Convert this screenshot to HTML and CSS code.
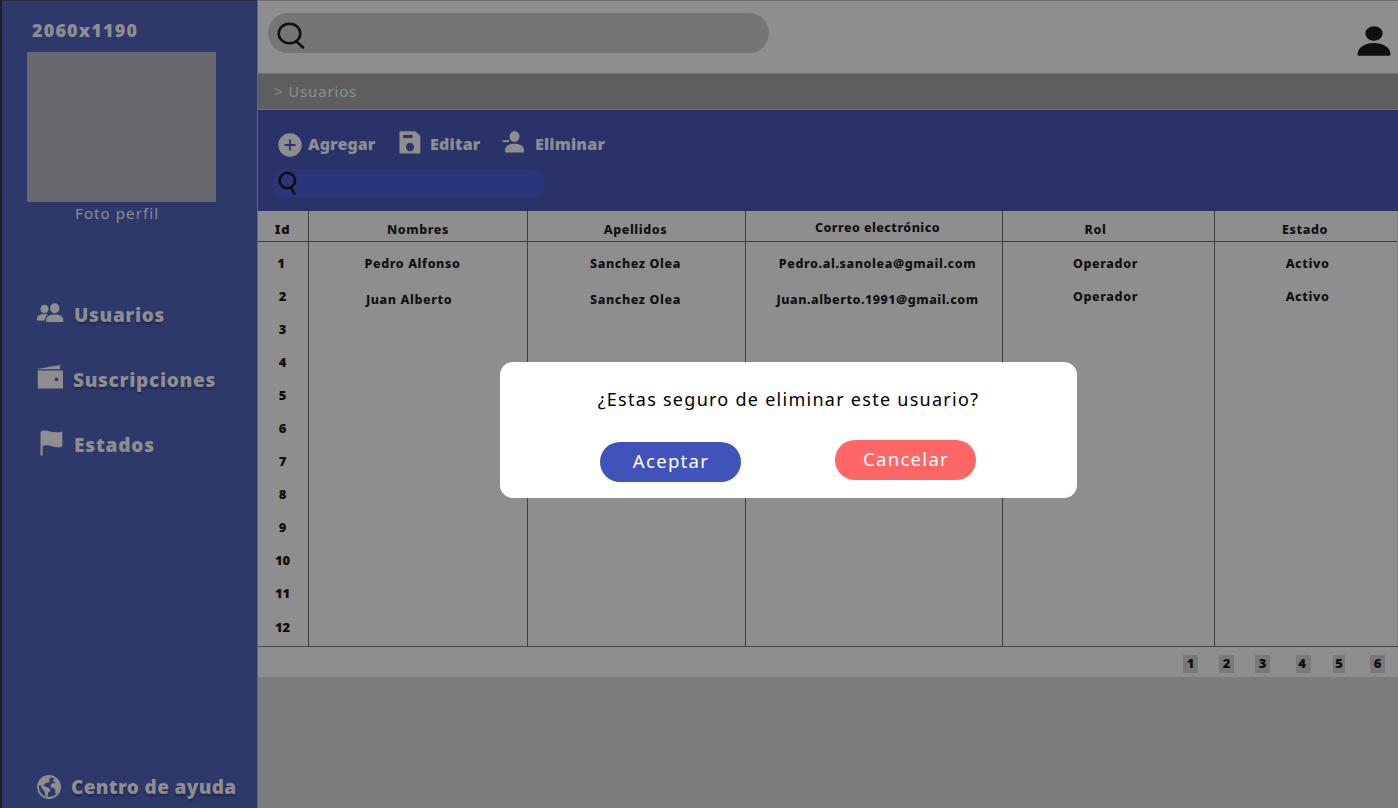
FILE: index.html
```html
<!DOCTYPE html>
<html lang="es">
<head>
<meta charset="utf-8">
<title>Usuarios</title>
<link rel="stylesheet" href="styles.css">
</head>
<body>
<div class="app">
  <aside class="sidebar">
    <div class="brand"><span>2060x1190</span></div>
    <div class="photo"></div>
    <div class="caption"><span>Foto perfil</span></div>
    <nav class="nav">
      <a class="link users"><svg width="27" height="20" viewBox="0 0 27 20"><ellipse cx="7.5" cy="6" rx="4.1" ry="4.3"/><path d="M0 17.500V15.500C0 12.500 3 11 7.500 11L11 11.400Q8 13.500 8 17.500Z"/><ellipse cx="17.700" cy="5.200" rx="4.700" ry="5"/><path d="M9.200 19V16.500C9.200 13 13 11.500 17.700 11.500S26.200 13 26.200 16.500V19Z"/></svg><span>Usuarios</span></a>
      <a class="link subs"><svg width="27" height="24" viewBox="0 0 27 24"><path d="M1 3.800 23 0V4.200H1Z"/><path fill-rule="evenodd" d="M.800 5.500H26V23.500H.800ZM19.500 12.500a1.900 1.900 0 1 0 .01 0Z"/></svg><span>Suscripciones</span></a>
      <a class="link states"><svg width="23" height="26" viewBox="0 0 23 26"><path d="M.500 1.800C7-2 12 4.500 22.300 1.500V16.500C14 19.500 10 13.500 2.700 16V25.500H.500Z"/></svg><span>Estados</span></a>
    </nav>
    <a class="link help"><svg width="24" height="24" viewBox="0 0 24 24"><circle class="ring" cx="12" cy="12" r="11"/><path d="M2 7 6 3 11 1 14 3 11.500 4.500 13 6 11 8 9 7.500 8 9.500 6 10 8 11.500 12 13 13.500 15.500 11 18 10.500 22 8.500 21 7.500 16 4.500 13 4 10.500 1 10ZM17 4 20 5 23 10V14L20 19 18 18 18.500 15 17 13 14 12.500 13.500 10 16 8 18.500 8.500 18 7 15.500 6Z"/></svg><span>Centro de ayuda</span></a>
  </aside>
  <main class="main">
    <header class="topbar">
      <div class="search"><svg width="30" height="28" viewBox="0 0 30 28"><ellipse cx="12.500" cy="11.500" rx="10.800" ry="9.700"/><path d="M19.500 19.500 26 25.500"/></svg></div>
      <svg class="user" width="34" height="30" viewBox="0 0 34 30"><ellipse cx="17" cy="7.500" rx="8.600" ry="7.300"/><path d="M.500 28C1 21 8 17 17 17S33 21 33.500 28Q33.500 29.700 32 29.700H2Q.500 29.700.500 28Z"/></svg>
    </header>
    <div class="crumb"><span>&gt; Usuarios</span></div>
    <section class="tools">
      <div class="actions">
        <a class="action add"><svg width="24" height="24" viewBox="0 0 24 24"><circle cx="12" cy="12" r="11.700"/><path class="plus" d="M12 6.500V17.500M6.500 12H17.500"/></svg><span>Agregar</span></a>
        <a class="action edit"><svg width="22" height="23" viewBox="0 0 22 23"><path fill-rule="evenodd" d="M1 .300H16.500L21.300 5V21.500Q21.300 22.500 20.300 22.500H1.500Q.500 22.500.500 21.500V1ZM4 4V7H13.500V4ZM11 11.800a4 4.200 0 1 0 .01 0Z"/></svg><span>Editar</span></a>
        <a class="action remove"><svg width="23" height="22" viewBox="0 0 23 22"><ellipse cx="12.500" cy="5.500" rx="5" ry="5.400"/><path d="M3 21.500V19C3 15 7 12.800 12.500 12.800S22 15 22 19V21.500Z"/><path d="M.500 9.200H7V11H.500Z"/></svg><span>Eliminar</span></a>
      </div>
      <div class="filter"><svg width="20" height="25" viewBox="0 0 20 25"><circle cx="9.300" cy="9.500" r="7.700"/><path d="M12.800 16.500 16.300 22.500"/></svg></div>
    </section>
    <section class="table">
      <div class="col ids"><b class="head">Id</b><b class="one">1</b><b>2</b><b>3</b><b>4</b><b>5</b><b>6</b><b>7</b><b>8</b><b>9</b><b>10</b><b>11</b><b>12</b></div>
      <div class="col names"><b class="head">Nombres</b><b class="first">Pedro Alfonso</b><b class="second low">Juan Alberto</b></div>
      <div class="col last"><b class="head">Apellidos</b><b>Sanchez Olea</b><b class="low">Sanchez Olea</b></div>
      <div class="col mail"><b class="head">Correo electrónico</b><b class="first">Pedro.al.sanolea@gmail.com</b><b class="second low">Juan.alberto.1991@gmail.com</b></div>
      <div class="col role"><b class="head">Rol</b><b>Operador</b><b>Operador</b></div>
      <div class="col state"><b class="head">Estado</b><b>Activo</b><b>Activo</b></div>
    </section>
    <footer class="pages"><b class="p1">1</b><b class="p2">2</b><b class="p3">3</b><b class="p4">4</b><b class="p5">5</b><b class="p6">6</b></footer>
  </main>
  <div class="dialog">
    <p class="question">¿Estas seguro de eliminar este usuario?</p>
    <div class="buttons"><a class="btn accept">Aceptar</a><a class="btn cancel">Cancelar</a></div>
  </div>
</div>
</body>
</html>
```
FILE: styles.css
```css
* { box-sizing: border-box; }
body { margin: 0; font-family: "Noto Sans", "Open Sans", sans-serif; background: #7c7c7c; }
.app { position: relative; width: 1398px; height: 808px; display: grid; grid-template-columns: 257px 1fr; overflow: hidden; }
svg { display: block; flex: none; fill: #8e8e8e; }
span, b, p, .btn { white-space: nowrap; }

.sidebar { display: flex; flex-direction: column; background: #2d386b; border-left: 2px solid #1f2024; border-top: 1px solid #282c3e; color: #8e8e8e; }
.brand { height: 51px; padding: 14.500px 0 0 30px; font-size: 18px; line-height: 28px; font-weight: 900; letter-spacing: 1.150px; }
.photo { width: 189px; height: 150px; margin-left: 25px; background: #68696f; }
.caption { padding-left: 73px; font-size: 15px; line-height: 22px; letter-spacing: 1.100px; font-weight: 400; }
.nav { display: flex; flex-direction: column; padding-top: 58px; }
.link { display: flex; height: 65px; align-items: center; font-size: 19px; font-weight: 900; letter-spacing: .650px; text-shadow: 0 2px 2px #1f284e; }
.users { padding-left: 35px; gap: 10px; }
.subs { padding-left: 35px; gap: 9px; letter-spacing: .700px; }
.states { padding-left: 38px; gap: 11px; letter-spacing: .850px; text-shadow: none; }
.users svg { margin-top: -3px; }
.subs svg { margin-top: -6px; }
.states svg { margin-top: -4px; }
.help { margin-top: auto; height: 43px; padding-left: 35px; gap: 10px; letter-spacing: .350px; }
.ring { fill: none; stroke: #8e8e8e; stroke-width: 1.8; }

.main { display: flex; flex-direction: column; min-width: 0; border-left: 1px solid #66676b; border-top: 1px solid #6b6b6b; }
.topbar { height: 72px; display: flex; justify-content: space-between; background: #8e8e8e; padding: 12px 7.500px 0 10px; }
.search { width: 501px; height: 40px; border-radius: 20px; background: #757575; padding: 9px 0 0 9px; }
.search svg, .filter svg { fill: none; stroke: #0f0f0f; stroke-width: 2.6; stroke-linecap: round; }
.user { fill: #0f0f0f; margin-top: 13px; }
.crumb { height: 37px; background: #5e5e5e; border-top: 1px solid #717171; border-bottom: 1px solid #717171; padding-left: 16px; color: #8e8e8e; font-size: 15px; line-height: 35px; font-weight: 400; letter-spacing: .850px; }
.tools { height: 101px; background: #29336a; }
.actions { display: flex; height: 60px; padding: 21px 0 0 20px; color: #8e8e8e; font-size: 16px; font-weight: 900; line-height: 26px; letter-spacing: .100px; }
.action { display: flex; }
.add { width: 121px; gap: 6px; }
.add svg { margin-top: 2px; }
.edit { width: 103px; gap: 9px; letter-spacing: .250px; }
.remove { gap: 10px; letter-spacing: .200px; }
.plus { stroke: #29336a; stroke-width: 1.8; }
.filter { width: 272px; height: 27px; margin-left: 15px; border-radius: 14px; background: #2a367c; padding: 1px 0 0 5px; }

.table { display: grid; grid-template-columns: 51px 219px 218px 257px 212px 183px; height: 436px; background: #8e8e8e; border-bottom: 1px solid #454545; color: #0f0f0f; font-size: 12.500px; }
.col { display: flex; flex-direction: column; border-right: 1px solid #3e3e3e; }
.state { border-right: 1px solid #7c7c7c; }
.col b { height: 33.100px; line-height: 33px; padding-top: 4.500px; text-align: center; font-weight: 800; letter-spacing: .600px; }
.col .head { height: 31px; line-height: 37px; padding-top: 0; border-bottom: 1px solid #3e3e3e; letter-spacing: .600px; }
.col .low { padding-top: 7.500px; }
.ids b { font-size: 13px; font-weight: 900; letter-spacing: 0; padding-right: 1px; }
.ids .one { padding-right: 4px; }
.names .first { padding-right: 11px; }
.names .second { padding-right: 18px; }
.last b { padding-right: 2px; }
.mail b { padding-left: 7px; }
.mail .second { letter-spacing: .530px; }
.mail .head { line-height: 34px; letter-spacing: .450px; }
.role b { padding-right: 6px; }
.role .head { padding-right: 26px; line-height: 38px; }
.state b { padding-left: 3px; }
.state .head { padding-left: 0; padding-right: 2px; }
.pages { height: 30px; display: flex; padding: 8px 0 0 925px; background: #8e8e8e; font-size: 13px; color: #0f0f0f; }
.pages b { width: 15px; height: 18px; background: #797979; text-align: center; line-height: 16px; font-weight: 900; }
.p2, .p3 { margin-left: 21px; }
.pages .p4 { margin-left: 26px; padding-right: 3px; }
.p5 { margin-left: 22px; }
.pages .p5 { width: 12px; }
.pages .p6 { margin-left: 25px; }

.dialog { position: absolute; left: 500px; top: 362px; width: 577px; height: 136px; background: #fff; border-radius: 13px; }
.question { margin: 22px 0 0; font-size: 18px; line-height: 30px; text-align: center; letter-spacing: 1.270px; color: #000; }
.buttons { display: flex; padding: 26px 0 0 100px; gap: 94px; }
.btn { width: 141px; height: 40px; border-radius: 20px; color: #fff; text-align: center; font-size: 18.500px; line-height: 38px; letter-spacing: 1.300px; padding-left: 1px; }
.accept { margin-top: 2px; background: #4053bb; }
.cancel { background: #ff6767; }
```
